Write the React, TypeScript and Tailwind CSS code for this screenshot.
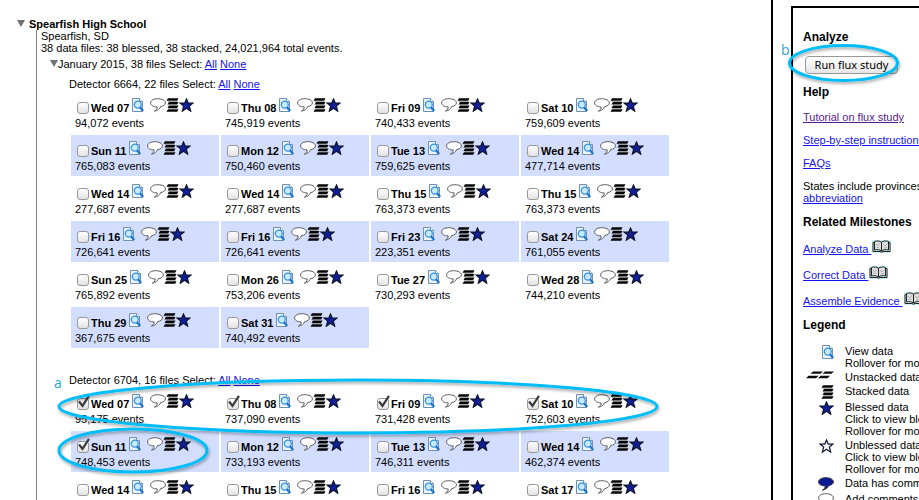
import React, { useId, useState } from "react";

type DataFile = { day: string; events?: string; checked?: boolean };

const detector6664: DataFile[] = [
  { day: "Wed 07", events: "94,072" },
  { day: "Thu 08", events: "745,919" },
  { day: "Fri 09", events: "740,433" },
  { day: "Sat 10", events: "759,609" },
  { day: "Sun 11", events: "765,083" },
  { day: "Mon 12", events: "750,460" },
  { day: "Tue 13", events: "759,625" },
  { day: "Wed 14", events: "477,714" },
  { day: "Wed 14", events: "277,687" },
  { day: "Wed 14", events: "277,687" },
  { day: "Thu 15", events: "763,373" },
  { day: "Thu 15", events: "763,373" },
  { day: "Fri 16", events: "726,641" },
  { day: "Fri 16", events: "726,641" },
  { day: "Fri 23", events: "223,351" },
  { day: "Sat 24", events: "761,055" },
  { day: "Sun 25", events: "765,892" },
  { day: "Mon 26", events: "753,206" },
  { day: "Tue 27", events: "730,293" },
  { day: "Wed 28", events: "744,210" },
  { day: "Thu 29", events: "367,675" },
  { day: "Sat 31", events: "740,492" },
];

const detector6704: DataFile[] = [
  { day: "Wed 07", events: "95,175", checked: true },
  { day: "Thu 08", events: "737,090", checked: true },
  { day: "Fri 09", events: "731,428", checked: true },
  { day: "Sat 10", events: "752,603", checked: true },
  { day: "Sun 11", events: "748,453", checked: true },
  { day: "Mon 12", events: "733,193" },
  { day: "Tue 13", events: "746,311" },
  { day: "Wed 14", events: "462,374" },
  { day: "Wed 14" },
  { day: "Thu 15" },
  { day: "Fri 16" },
  { day: "Sat 17" },
];

function ViewIcon() {
  return (
    <svg width="12" height="14" viewBox="0 0 12 14" className="shrink-0" aria-hidden="true">
      <path d="M.5 .5H7.500L10.500 3.500V13.500H.5Z" fill="#eaf4fd" stroke="#7390ad" />
      <path d="M7.500 .5V3.500H10.500" fill="#fff" stroke="#7390ad" />
      <circle cx="5.800" cy="6.600" r="3.500" fill="#c4ebff" stroke="#3c92dd" strokeWidth="1.300" />
      <path d="M8 9.300 11.200 13" stroke="#1c74cc" strokeWidth="2.200" />
    </svg>
  );
}

function BubbleIcon({ filled = false }: { filled?: boolean }) {
  return (
    <svg width="16" height="14" viewBox="0 0 16 14" className="shrink-0" aria-hidden="true">
      <path
        d="M7.800 .7C3.600 .7 .6 2.400 .6 4.900C.6 7.300 3.400 8.900 7.200 8.900C7.400 10.500 6.400 11.900 4.400 13.200C7.600 12.600 9.900 11 10.600 8.600C13.500 8.100 15.400 6.800 15.400 4.900C15.400 2.400 12 .7 7.800 .7Z"
        fill={filled ? "#0a1a96" : "#fff"}
        stroke={filled ? "#333" : "#5a5a5a"}
        strokeWidth="1"
      />
    </svg>
  );
}

function StackIcon() {
  return (
    <svg width="13" height="14" viewBox="0 0 13 14" className="shrink-0" aria-hidden="true">
      <path
        d="M2 .2H12.500L11.200 2.800H.5ZM3 4H12.500L11.200 6.400H1.500ZM3 7.600H12.500L11.200 10H1.500ZM2 11.200H12.500L11.200 13.800H.5Z"
        fill="#050505"
      />
      <path d="M1.800 3.400H11.500M2.500 7H11.500M2.500 10.600H11.500" stroke="#777" strokeWidth=".7" />
    </svg>
  );
}

function UnstackedIcon() {
  return (
    <svg width="28" height="8" viewBox="0 0 28 8" className="shrink-0" aria-hidden="true">
      <path
        d="M7 .4H17L14.500 2.800H4.500ZM19 .4H28L25.500 2.800H16.500ZM2.500 4.800H12.500L10 7.200H0ZM14.500 4.800H24L21.500 7.200H12Z"
        fill="#0a0a0a"
      />
    </svg>
  );
}

function StarIcon({ hollow = false }: { hollow?: boolean }) {
  return (
    <svg width="15" height="14" viewBox="0 0 15 14" className="shrink-0" aria-hidden="true">
      <path
        d="M7.500 1 9.200 5.100H14L10.300 8 11.700 13.200 7.500 10.300 3.300 13.200 4.700 8 1 5.100H5.800Z"
        fill={hollow ? "#fff" : "#0d1f9c"}
        stroke="#10142e"
        strokeWidth="1.200"
      />
    </svg>
  );
}

function BookIcon() {
  return (
    <svg width="19" height="13" viewBox="0 0 19 13" className="shrink-0" aria-hidden="true">
      <path d="M0 0H19V13H0Z" fill="#c8f1f3" />
      <path
        d="M2.500 10V1.500C5 .6 7.500 .8 9.500 2.200C11.500 .8 14 .6 16.500 1.500V10C14 9.300 11.500 9.500 9.500 11C7.500 9.500 5 9.300 2.500 10Z"
        fill="#dedede"
        stroke="#222"
      />
      <path d="M9.500 2V11M2.500 2.500H1V11.500H8L9.500 12.300 11 11.500H18V2.500H16.500" fill="none" stroke="#222" />
      <path d="M4 4 5.500 5.500 8 3.500M11 4 13 6 15.500 3.500M4 7.500 7 7M12 8 15 7.500" fill="none" stroke="#b0b0b0" />
    </svg>
  );
}

function Triangle() {
  return (
    <svg width="8" height="7" viewBox="0 0 8 7" className="mb-px shrink-0" aria-hidden="true">
      <path d="M0 0H8L4 7Z" fill="#707070" />
    </svg>
  );
}

function Link({ children, visited = false }: { children: React.ReactNode; visited?: boolean }) {
  return (
    <a href="#" className={visited ? "text-[#551a8b] underline" : "text-[#1414ee] underline"}>
      {children}
    </a>
  );
}

function FileCell({ file, shaded }: { file: DataFile; shaded: boolean }) {
  const id = useId();
  const [checked, setChecked] = useState(Boolean(file.checked));
  return (
    <li className={shaded ? "h-[41px] bg-[#d3deff] px-1 pt-[5px]" : "h-[41px] px-1 pt-[5px]"}>
      <div className="flex h-5 items-start">
        <span className="relative mt-[5px] ml-0.5 size-3 shrink-0">
          <input
            id={id}
            type="checkbox"
            checked={checked}
            onChange={() => setChecked(!checked)}
            className="block size-3 appearance-none rounded-[3px] border border-[#999] bg-linear-to-b from-white to-[#e2e2e2]"
          />
          {checked && (
            <svg
              width="14"
              height="14"
              viewBox="0 0 14 14"
              className="pointer-events-none absolute -top-1 left-0"
              aria-hidden="true"
            >
              <path d="M2 7.500 5.500 11.800 12 1.800" fill="none" stroke="#3c3c3c" strokeWidth="2.200" />
            </svg>
          )}
        </span>
        <label htmlFor={id} className="mt-[5px] ml-0.5 font-bold">
          {file.day}
        </label>
        <span className="mt-px ml-[3px] flex">
          <ViewIcon />
          <span className="ml-1.5 flex">
            <BubbleIcon />
            <StackIcon />
            <StarIcon />
          </span>
        </span>
      </div>
      {file.events && <p>{file.events} events</p>}
    </li>
  );
}

function Detector({ title, files }: { title: string; files: DataFile[] }) {
  return (
    <section className="pl-7">
      <h3>
        {title} Select: <Link>All</Link> <Link>None</Link>
      </h3>
      <ul className="mt-0.5 ml-0.5 grid grid-cols-[repeat(4,148px)] gap-0.5">
        {files.map((f, i) => (
          <FileCell key={i} file={f} shaded={Math.floor(i / 4) % 2 === 1} />
        ))}
      </ul>
    </section>
  );
}

function LegendRow({ icon, lines }: { icon: React.ReactNode; lines: string[] }) {
  return (
    <li className="mb-0.5 flex gap-[11px]">
      <span className="flex w-[31px] shrink-0 items-start justify-end">{icon}</span>
      <div>
        {lines.map((l) => (
          <p key={l}>{l}</p>
        ))}
      </div>
    </li>
  );
}

function Marks() {
  return (
    <svg
      className="pointer-events-none absolute top-0 left-0 h-full w-full overflow-hidden"
      aria-hidden="true"
      fill="none"
      stroke="#00bdf8"
      strokeWidth="3"
    >
      <defs>
        <filter id="soft" x="-10%" y="-20%" width="120%" height="150%">
          <feDropShadow dx="1" dy="2" stdDeviation="1.500" floodColor="#000" floodOpacity="0.35" />
        </filter>
      </defs>
      <g filter="url(#soft)">
        <ellipse cx="358" cy="406.500" rx="299" ry="26.500" />
        <ellipse cx="133" cy="450.500" rx="74" ry="21.500" />
        <ellipse cx="843.500" cy="63" rx="54" ry="17.500" />
      </g>
    </svg>
  );
}

export default function App() {
  return (
    <div className="relative flex h-screen overflow-hidden bg-white font-['Liberation_Sans',Arial,sans-serif] text-[11px] leading-3 whitespace-nowrap text-black">
      <main className="min-w-0 flex-1 overflow-hidden border-r-2 border-black pt-[18px]">
        <h1 className="flex items-center gap-1 pl-[17px] font-bold">
          <Triangle />
          Spearfish High School
        </h1>
        <div className="ml-9 border-l border-[#808080] pb-8 pl-1">
          <p>Spearfish, SD</p>
          <p>38 data files: 38 blessed, 38 stacked, 24,021,964 total events.</p>
          <h2 className="mt-1 mb-2 flex items-center pl-[9px]">
            <Triangle />
            <span>
              January 2015, 38 files Select: <Link>All</Link> <Link>None</Link>
            </span>
          </h2>
          <div className="flex flex-col gap-[26px]">
            <Detector title="Detector 6664, 22 files" files={detector6664} />
            <Detector title="Detector 6704, 16 files" files={detector6704} />
          </div>
        </div>
      </main>

      <aside className="mt-1.5 ml-[18px] w-32 shrink-0 overflow-hidden border-t-2 border-l-2 border-black pt-[22px] pl-2.5">
        <h2 className="text-[12px] leading-[14px] font-bold">Analyze</h2>
        <button
          type="button"
          className="mt-3 ml-0.5 block h-[18px] w-[93px] rounded-[4px] border border-[#999] bg-linear-to-b from-white to-[#e6e6e6] font-['Noto_Sans',sans-serif] text-[11px] leading-4"
        >
          Run flux study
        </button>
        <h2 className="mt-[11px] text-[12px] leading-[14px] font-bold">Help</h2>
        <ul className="mt-3 flex flex-col gap-[11px]">
          <li>
            <Link visited>Tutorial on flux study</Link>
          </li>
          <li>
            <Link>Step-by-step instructions</Link>
          </li>
          <li>
            <Link>FAQs</Link>
          </li>
        </ul>
        <p className="mt-[11px]">
          States include provinces
          <br />
          <Link>abbreviation</Link>
        </p>
        <h2 className="mt-[11px] text-[12px] leading-[14px] font-bold">Related Milestones</h2>
        <ul className="mt-[11px] flex flex-col gap-2.5">
          {["Analyze Data", "Correct Data", "Assemble Evidence"].map((m) => (
            <li key={m} className="flex h-4">
              <a href="#" className="mt-[3px] whitespace-pre text-[#1414ee] underline">
                {m + " "}
              </a>
              <span className="ml-px">
                <BookIcon />
              </span>
            </li>
          ))}
        </ul>
        <h2 className="mt-2.5 text-[12px] leading-[14px] font-bold">Legend</h2>
        <ul className="mt-[13px]">
          <LegendRow icon={<ViewIcon />} lines={["View data", "Rollover for more"]} />
          <LegendRow icon={<UnstackedIcon />} lines={["Unstacked data"]} />
          <LegendRow icon={<StackIcon />} lines={["Stacked data"]} />
          <LegendRow icon={<StarIcon />} lines={["Blessed data", "Click to view blessing", "Rollover for more"]} />
          <LegendRow icon={<StarIcon hollow />} lines={["Unblessed data", "Click to view blessing", "Rollover for more"]} />
          <LegendRow icon={<BubbleIcon filled />} lines={["Data has comments"]} />
          <LegendRow icon={<BubbleIcon />} lines={["Add comments"]} />
        </ul>
      </aside>

      <Marks />
      <span className="absolute top-[375px] left-[54px] font-['Open_Sans',sans-serif] text-[14px] leading-4 text-[#2aa5dc]">
        a
      </span>
      <span className="absolute top-[42px] left-[781px] font-['Open_Sans',sans-serif] text-[14px] leading-4 text-[#2aa5dc]">
        b
      </span>
    </div>
  );
}
